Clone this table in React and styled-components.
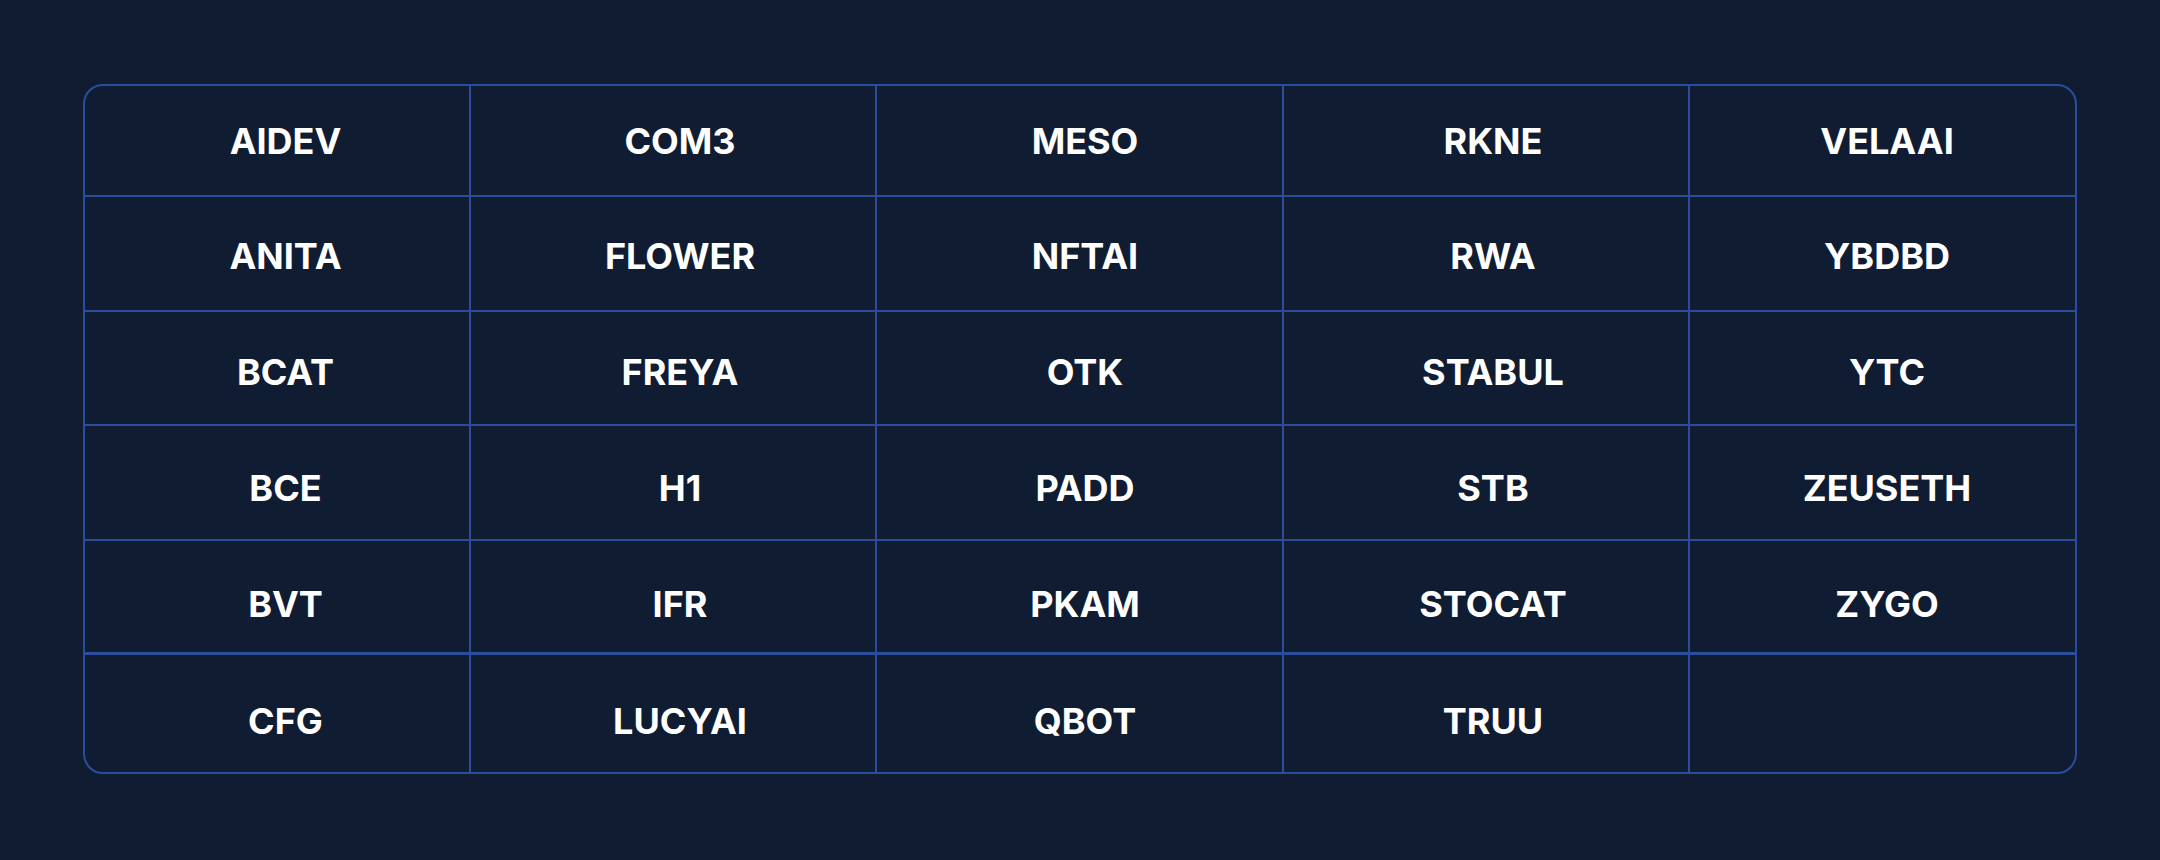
import React from "react";
import styled, { createGlobalStyle } from "styled-components";

const Global = createGlobalStyle`
  html, body {
    margin: 0;
    padding: 0;
    background: #101c32;
  }
  body {
    font-family: Inter, "Noto Sans", sans-serif;
  }
`;

const Page = styled.div`
  box-sizing: border-box;
  width: 2160px;
  height: 860px;
  padding: 84px 0 0 83px;
  background: #101c32;
`;

const Table = styled.div`
  box-sizing: border-box;
  width: 1994px;
  border: 2px solid #2b4d9c;
  border-radius: 20px;
  overflow: hidden;
  background: #101c32;
`;

const Row = styled.div`
  box-sizing: border-box;
  display: grid;
  grid-template-columns: 386px 406px 407px 406px 1fr;
  height: ${(p) => p.$h}px;
  border-bottom: ${(p) => (p.$last ? "none" : `${p.$divider ? 3 : 2}px solid #2b4d9c`)};
`;

const Cell = styled.div`
  box-sizing: border-box;
  display: flex;
  align-items: center;
  justify-content: center;
  padding-left: ${(p) => p.$indent}px;
  padding-top: ${(p) => p.$nudge * 2}px;
  border-right: ${(p) => (p.$end ? "none" : "2px solid #2b4d9c")};
  color: #ffffff;
  font-family: Inter, "Noto Sans", sans-serif;
  font-weight: 700;
  font-size: 36px;
  letter-spacing: 0;
  line-height: 1;
`;

const rows = [
  ["AIDEV", "COM3", "MESO", "RKNE", "VELAAI"],
  ["ANITA", "FLOWER", "NFTAI", "RWA", "YBDBD"],
  ["BCAT", "FREYA", "OTK", "STABUL", "YTC"],
  ["BCE", "H1", "PADD", "STB", "ZEUSETH"],
  ["BVT", "IFR", "PKAM", "STOCAT", "ZYGO"],
  ["CFG", "LUCYAI", "QBOT", "TRUU", ""],
];

const heights = [111, 115, 114, 115, 114, 117];
const nudges = [0.5, 2, 4, 5.5, 7.5, 7.5];
const indents = [17, 14, 11, 14, 9];

export default function App() {
  return (
    <>
      <Global />
      <Page>
        <Table>
          {rows.map((r, i) => (
            <Row
              key={i}
              $h={heights[i]}
              $divider={i === 4}
              $last={i === rows.length - 1}
            >
              {r.map((t, j) => (
                <Cell
                  key={j}
                  $end={j === r.length - 1}
                  $nudge={nudges[i]}
                  $indent={indents[j]}
                >
                  {t}
                </Cell>
              ))}
            </Row>
          ))}
        </Table>
      </Page>
    </>
  );
}
